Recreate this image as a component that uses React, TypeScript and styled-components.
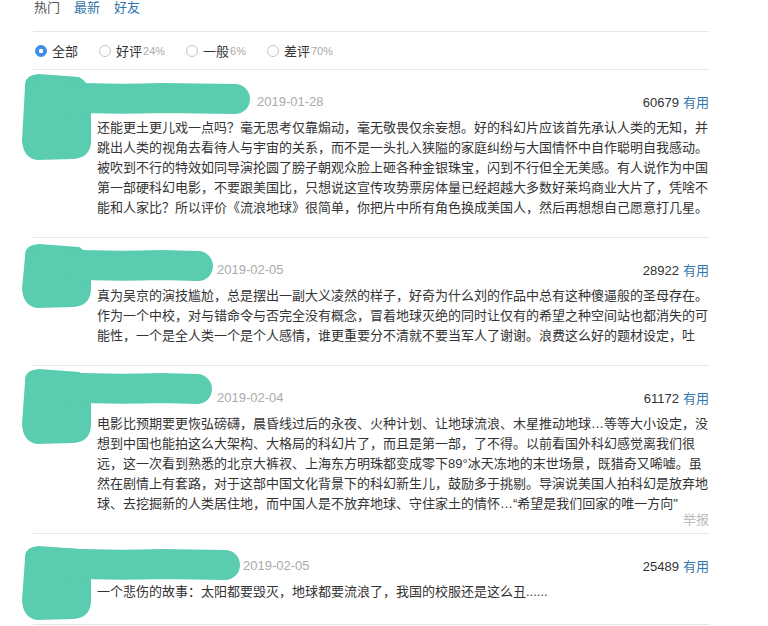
import React from "react";
import styled, { createGlobalStyle } from "styled-components";

const GlobalStyle = createGlobalStyle`
  body {
    margin: 0;
    background: #fff;
    font-family: "Liberation Sans", "Noto Sans CJK SC", sans-serif;
    font-size: 13px;
    color: #333;
  }
`;

const Page = styled.div`
  width: 676px;
  margin-left: 33px;
`;

const Tabs = styled.nav`
  display: flex;
  gap: 14px;
  height: 31px;
  padding-left: 1px;
  line-height: 15px;
  border-bottom: 1px solid #e6e6e6;
`;

const Tab = styled.a<{ $active?: boolean }>`
  color: ${(p) => (p.$active ? "#555" : "#37a")};
  text-decoration: none;
`;

const Filter = styled.div`
  display: flex;
  align-items: center;
  gap: 21px;
  height: 37px;
  padding-left: 2px;
  border-bottom: 1px solid #e6e6e6;
`;

const Option = styled.label`
  display: flex;
  align-items: center;
  color: #333;
`;

const Radio = styled.span<{ $checked?: boolean }>`
  box-sizing: border-box;
  width: 12px;
  height: 12px;
  margin-right: 5px;
  border-radius: 50%;
  border: 1px solid ${(p) => (p.$checked ? "#3c8ee6" : "#c4c4c4")};
  background: ${(p) =>
    p.$checked
      ? "radial-gradient(circle, #fff 0 2px, #3c8ee6 2.5px)"
      : "#fff"};
`;

const Percent = styled.span`
  margin-left: 1px;
  font-size: 11px;
  color: #aaa;
`;

const Item = styled.div<{ $last?: boolean }>`
  position: relative;
  display: flex;
  padding: 21px 0 ${(p) => (p.$last ? 22 : 19)}px;
  border-bottom: 1px solid #e6e6e6;
`;

const AvatarSlot = styled.div`
  width: 64px;
  flex-shrink: 0;
`;

const Body = styled.div`
  flex: 1;
  min-width: 0;
`;

const Header = styled.div`
  display: flex;
  align-items: center;
  height: 20px;
  margin-bottom: 7px;
`;

const Name = styled.span<{ $w: number }>`
  width: ${(p) => p.$w}px;
  margin-right: 8px;
`;

const DateText = styled.span`
  color: #aaa;
`;

const Votes = styled.span`
  margin-left: auto;
  color: #333;
`;

const Useful = styled.a`
  margin-left: 4px;
  color: #37a;
  text-decoration: none;
`;

const Text = styled.p`
  margin: 0;
  line-height: 20px;
  color: #333;
`;

const Report = styled.a`
  position: absolute;
  right: 0;
  bottom: 3px;
  line-height: 20px;
  color: #bbb;
`;

const BlobSvg = styled.svg`
  position: absolute;
  left: -12px;
  top: 0;
  overflow: visible;
`;

interface Blob {
  top: number;
  colH: number;
  barY: number;
  barEnd: number;
}

// the scribble that hides avatar and user name
function Redaction({ blob }: { blob: Blob }) {
  const fill = "#5acdb1";
  return (
    <BlobSvg width={blob.barEnd + 30} height={blob.colH + 10}>
      <path
        d={`M4 ${blob.top + 14} Q3 ${blob.top + 2} 18 ${blob.top + 1} L58 ${blob.top + 4} Q70 ${blob.top + 10} 70 ${blob.top + 30} L70 ${blob.colH - 16} Q69 ${blob.colH} 52 ${blob.colH + 1} L16 ${blob.colH + 2} Q2 ${blob.colH} 1 ${blob.colH - 18} Z`}
        fill={fill}
      />
      <path
        d={`M20 ${blob.barY - 2} Q80 ${blob.barY + 2} 140 ${blob.barY} L${blob.barEnd} ${blob.barY + 1}`}
        stroke={fill}
        strokeWidth={30}
        strokeLinecap="round"
        fill="none"
      />
    </BlobSvg>
  );
}

interface Comment {
  nameW: number;
  date: string;
  votes: string;
  text: string;
  report?: boolean;
  blob: Blob;
}

const comments: Comment[] = [
  {
    nameW: 152,
    date: "2019-01-28",
    votes: "60679",
    text: "还能更土更儿戏一点吗？毫无思考仅靠煽动，毫无敬畏仅余妄想。好的科幻片应该首先承认人类的无知，并跳出人类的视角去看待人与宇宙的关系，而不是一头扎入狭隘的家庭纠纷与大国情怀中自作聪明自我感动。被吹到不行的特效如同导演抡圆了膀子朝观众脸上砸各种金银珠宝，闪到不行但全无美感。有人说作为中国第一部硬科幻电影，不要跟美国比，只想说这宣传攻势票房体量已经超越大多数好莱坞商业大片了，凭啥不能和人家比？所以评价《流浪地球》很简单，你把片中所有角色换成美国人，然后再想想自己愿意打几星。",
    blob: { top: 3, colH: 88, barY: 28, barEnd: 214 },
  },
  {
    nameW: 112,
    date: "2019-02-05",
    votes: "28922",
    text: "真为吴京的演技尴尬，总是摆出一副大义凌然的样子，好奇为什么刘的作品中总有这种傻逼般的圣母存在。作为一个中校，对与错命令与否完全没有概念，冒着地球灭绝的同时让仅有的希望之种空间站也都消失的可能性，一个是全人类一个是个人感情，谁更重要分不清就不要当军人了谢谢。浪费这么好的题材设定，吐",
    blob: { top: 5, colH: 68, barY: 27, barEnd: 177 },
  },
  {
    nameW: 112,
    date: "2019-02-04",
    votes: "61172",
    text: "电影比预期要更恢弘磅礴，晨昏线过后的永夜、火种计划、让地球流浪、木星推动地球…等等大小设定，没想到中国也能拍这么大架构、大格局的科幻片了，而且是第一部，了不得。以前看国外科幻感觉离我们很远，这一次看到熟悉的北京大裤衩、上海东方明珠都变成零下89°冰天冻地的末世场景，既猎奇又唏嘘。虽然在剧情上有套路，对于这部中国文化背景下的科幻新生儿，鼓励多于挑剔。导演说美国人拍科幻是放弃地球、去挖掘新的人类居住地，而中国人是不放弃地球、守住家土的情怀…“希望是我们回家的唯一方向\"",
    report: true,
    blob: { top: 2, colH: 76, barY: 22, barEnd: 176 },
  },
  {
    nameW: 138,
    date: "2019-02-05",
    votes: "25489",
    text: "一个悲伤的故事：太阳都要毁灭，地球都要流浪了，我国的校服还是这么丑......",
    blob: { top: 11, colH: 84, barY: 30, barEnd: 204 },
  },
];

export default function App() {
  return (
    <Page>
      <GlobalStyle />
      <Tabs>
        <Tab $active>热门</Tab>
        <Tab href="#">最新</Tab>
        <Tab href="#">好友</Tab>
      </Tabs>
      <Filter>
        <Option>
          <Radio $checked />
          全部
        </Option>
        <Option>
          <Radio />
          好评<Percent>24%</Percent>
        </Option>
        <Option>
          <Radio />
          一般<Percent>6%</Percent>
        </Option>
        <Option>
          <Radio />
          差评<Percent>70%</Percent>
        </Option>
      </Filter>
      {comments.map((c, i) => (
        <Item key={i} $last={i === comments.length - 1}>
          <AvatarSlot />
          <Body>
            <Header>
              <Name $w={c.nameW} />
              <DateText>{c.date}</DateText>
              <Votes>
                {c.votes}
                <Useful href="#">有用</Useful>
              </Votes>
            </Header>
            <Text>{c.text}</Text>
          </Body>
          {c.report && <Report>举报</Report>}
          <Redaction blob={c.blob} />
        </Item>
      ))}
    </Page>
  );
}
